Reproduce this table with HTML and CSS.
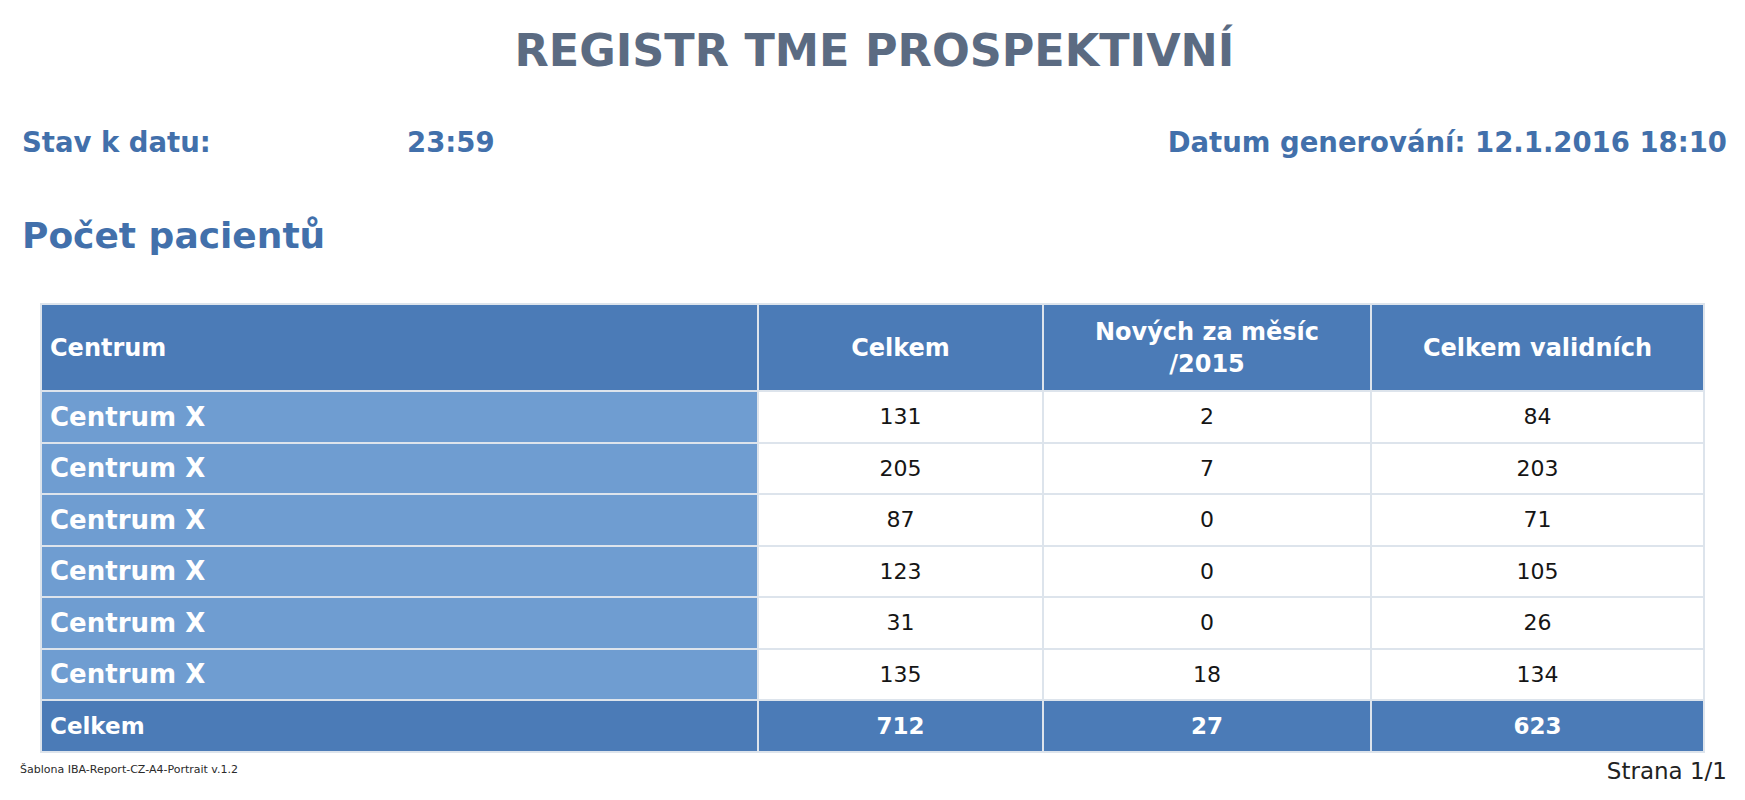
FILE: index.html
```html
<!DOCTYPE html>
<html lang="cs">
<head>
<meta charset="utf-8">
<title>Registr TME prospektivní</title>
<link rel="stylesheet" href="styles.css">
</head>
<body>
<div class="page">
  <h1 class="title">REGISTR TME PROSPEKTIVNÍ</h1>
  <div class="meta">
    <span class="meta-label">Stav k datu:</span>
    <span class="meta-value">23:59</span>
    <span class="meta-gen">Datum generování: 12.1.2016 18:10</span>
  </div>
  <h2 class="section">Počet pacientů</h2>
  <table class="report">
    <colgroup>
      <col class="c-name"><col class="c-total"><col class="c-new"><col class="c-valid">
    </colgroup>
    <thead>
      <tr>
        <th class="left">Centrum</th>
        <th>Celkem</th>
        <th>Nových za měsíc<br>/2015</th>
        <th>Celkem validních</th>
      </tr>
    </thead>
    <tbody>
      <tr><th class="name">Centrum X</th><td>131</td><td>2</td><td>84</td></tr>
      <tr><th class="name">Centrum X</th><td>205</td><td>7</td><td>203</td></tr>
      <tr><th class="name">Centrum X</th><td>87</td><td>0</td><td>71</td></tr>
      <tr><th class="name">Centrum X</th><td>123</td><td>0</td><td>105</td></tr>
      <tr><th class="name">Centrum X</th><td>31</td><td>0</td><td>26</td></tr>
      <tr><th class="name">Centrum X</th><td>135</td><td>18</td><td>134</td></tr>
    </tbody>
    <tfoot>
      <tr><th class="left">Celkem</th><td>712</td><td>27</td><td>623</td></tr>
    </tfoot>
  </table>
  <div class="footer">
    <div class="template">Šablona IBA-Report-CZ-A4-Portrait v.1.2</div>
    <div class="pager">Strana 1/1</div>
  </div>
</div>
</body>
</html>
```

FILE: styles.css
```css
html, body {
  margin: 0;
  padding: 0;
  background: #ffffff;
}

.page {
  font-family: "DejaVu Sans", Verdana, sans-serif;
  padding: 25px 18px 0 22px;
  box-sizing: border-box;
  width: 1745px;
}

.title {
  margin: 0;
  font-size: 44.5px;
  line-height: 52px;
  font-weight: bold;
  text-align: center;
  color: #5b6b82;
}

.meta {
  margin-top: 49px;
  display: grid;
  grid-template-columns: 385px 1fr auto;
  font-size: 27.5px;
  line-height: 32px;
  font-weight: bold;
  color: #4270ab;
}

.section {
  margin: 57px 0 0 0;
  font-size: 36px;
  line-height: 42px;
  font-weight: bold;
  color: #4270ab;
}

.report {
  margin: 46px 24px 0 18px;
  width: 1663px;
  border-collapse: collapse;
  table-layout: fixed;
  border: 2px solid #d6dde6;
}

.c-name { width: 717px; }
.c-total { width: 285px; }
.c-new { width: 328px; }
.c-valid { width: 333px; }

.report th,
.report td {
  border: 2px solid #dde4ec;
  padding: 0 8px;
  vertical-align: middle;
}

.report thead th {
  height: 85px;
  background: #4b7bb7;
  color: #ffffff;
  font-size: 24px;
  line-height: 32px;
  font-weight: bold;
  text-align: center;
}

.report thead th.left,
.report tfoot th.left {
  text-align: left;
}

.report tbody tr {
  height: 51.5px;
}

.report tbody th.name {
  background: #6f9dd1;
  color: #ffffff;
  text-align: left;
  font-size: 26px;
  font-weight: bold;
}

.report tbody td {
  background: #ffffff;
  color: #151515;
  font-size: 22px;
  text-align: center;
}

.report tfoot tr {
  height: 52px;
}

.report tfoot th,
.report tfoot td {
  background: #4b7bb7;
  color: #ffffff;
  font-size: 23px;
  font-weight: bold;
  text-align: center;
}

.footer {
  margin-top: 5px;
  display: flex;
  justify-content: space-between;
  align-items: flex-start;
}

.template {
  padding-top: 5px;
  font-size: 11px;
  line-height: 14px;
  color: #2a2a2a;
  margin-left: -2px;
}

.pager {
  font-size: 23px;
  line-height: 27px;
  color: #222222;
}
```
